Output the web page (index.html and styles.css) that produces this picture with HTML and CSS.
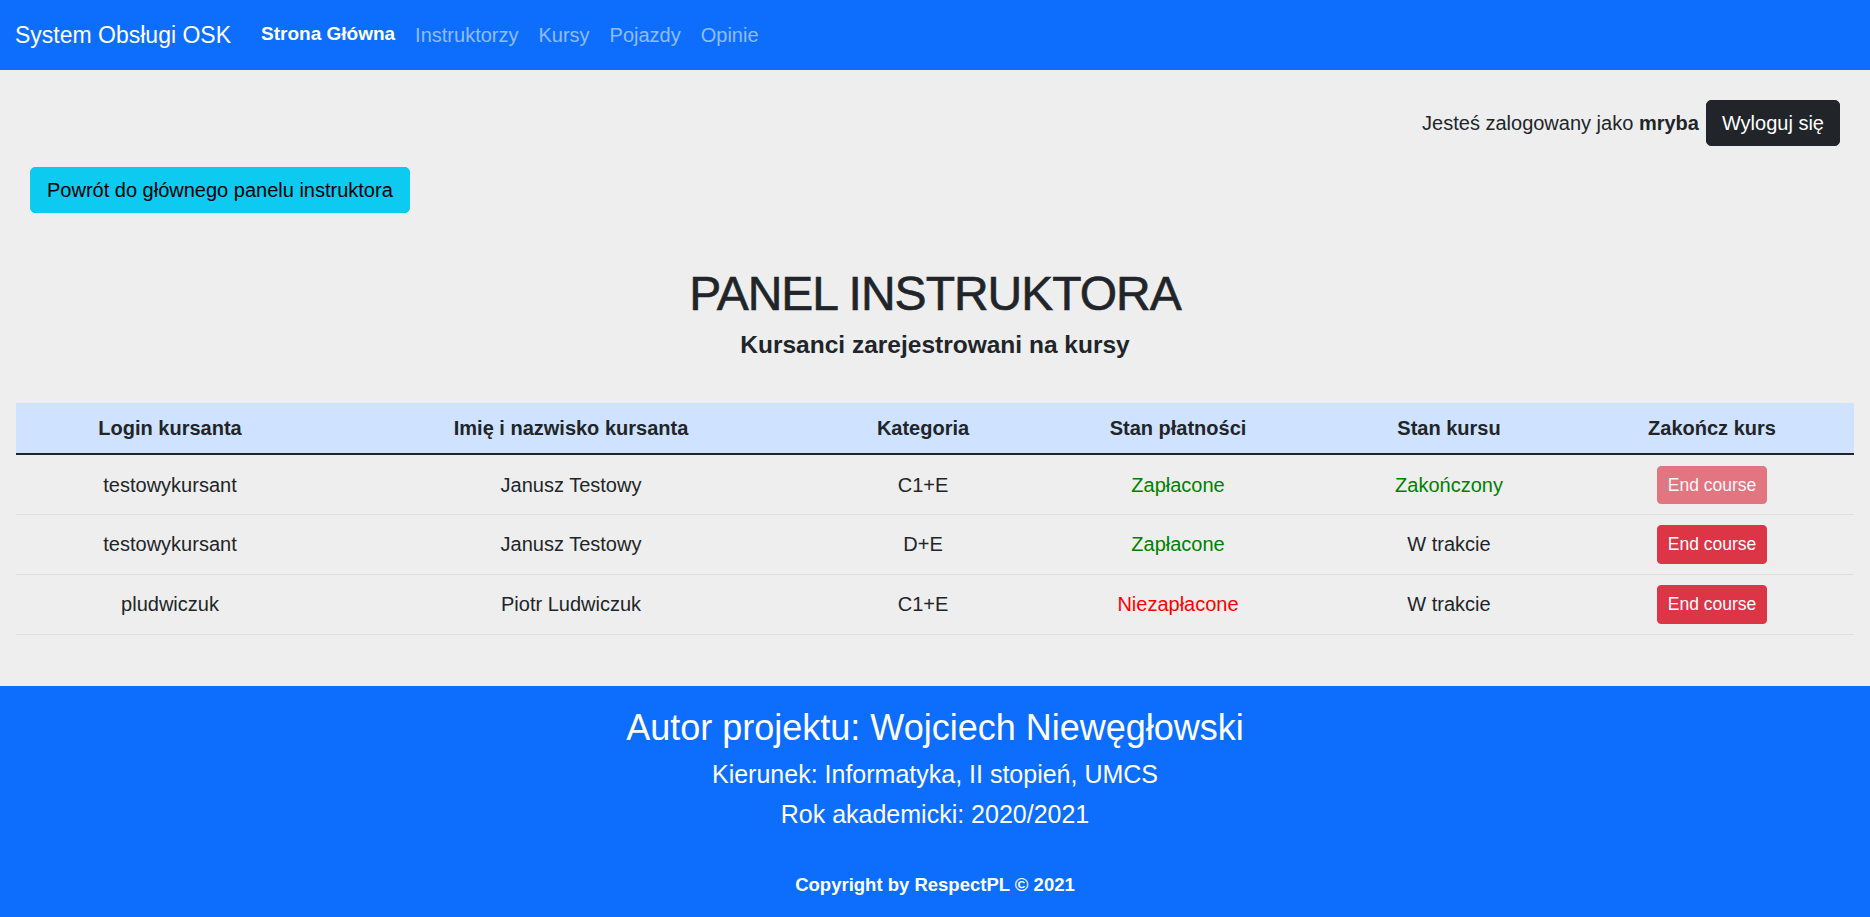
FILE: index.html
```html
<!DOCTYPE html>
<html lang="pl">
<head>
<meta charset="utf-8">
<title>Panel instruktora</title>
<link rel="stylesheet" href="styles.css">
</head>
<body>
<nav class="navbar">
  <a class="brand" href="#">System Obsługi OSK</a>
  <ul class="nav">
    <li><a class="nav-link active" href="#">Strona Główna</a></li>
    <li><a class="nav-link" href="#">Instruktorzy</a></li>
    <li><a class="nav-link" href="#">Kursy</a></li>
    <li><a class="nav-link" href="#">Pojazdy</a></li>
    <li><a class="nav-link" href="#">Opinie</a></li>
  </ul>
</nav>
<main class="main">
  <div class="login-row">
    <span class="login-text">Jesteś zalogowany jako <b>mryba</b></span>
    <button class="btn btn-dark">Wyloguj się</button>
  </div>
  <div class="back-row">
    <button class="btn btn-info">Powrót do głównego panelu instruktora</button>
  </div>
  <h1 class="title">PANEL INSTRUKTORA</h1>
  <h5 class="subtitle">Kursanci zarejestrowani na kursy</h5>
  <table class="table">
    <colgroup>
      <col class="c1"><col class="c2"><col class="c3"><col class="c4"><col class="c5"><col class="c6">
    </colgroup>
    <thead>
      <tr>
        <th>Login kursanta</th>
        <th>Imię i nazwisko kursanta</th>
        <th>Kategoria</th>
        <th>Stan płatności</th>
        <th>Stan kursu</th>
        <th>Zakończ kurs</th>
      </tr>
    </thead>
    <tbody>
      <tr>
        <td>testowykursant</td>
        <td>Janusz Testowy</td>
        <td>C1+E</td>
        <td class="ok">Zapłacone</td>
        <td class="ok">Zakończony</td>
        <td><button class="btn btn-danger btn-sm" disabled>End course</button></td>
      </tr>
      <tr>
        <td>testowykursant</td>
        <td>Janusz Testowy</td>
        <td>D+E</td>
        <td class="ok">Zapłacone</td>
        <td>W trakcie</td>
        <td><button class="btn btn-danger btn-sm">End course</button></td>
      </tr>
      <tr>
        <td>pludwiczuk</td>
        <td>Piotr Ludwiczuk</td>
        <td>C1+E</td>
        <td class="bad">Niezapłacone</td>
        <td>W trakcie</td>
        <td><button class="btn btn-danger btn-sm">End course</button></td>
      </tr>
    </tbody>
  </table>
</main>
<footer class="footer">
  <h3 class="f-author">Autor projektu: Wojciech Niewęgłowski</h3>
  <h5 class="f-line">Kierunek: Informatyka, II stopień, UMCS</h5>
  <h5 class="f-line">Rok akademicki: 2020/2021</h5>
  <p class="f-copy">Copyright by RespectPL © 2021</p>
</footer>
</body>
</html>
```
FILE: styles.css
```css
* { box-sizing: border-box; }
html, body { margin: 0; padding: 0; }
body {
  font-family: "Liberation Sans", Arial, sans-serif;
  font-size: 20px;
  line-height: 1.5;
  color: #212529;
  background: #eeeeee;
}
a { text-decoration: none; }

.navbar {
  display: flex;
  align-items: center;
  height: 70px;
  padding: 0 15px;
  background: #0d6efd;
}
.brand {
  font-size: 23px;
  color: #fff;
  margin-right: 20px;
  line-height: 1.5;
}
.nav {
  display: flex;
  list-style: none;
  margin: 0;
  padding: 0;
}
.nav-link {
  display: block;
  padding: 10px 10px;
  color: rgba(255,255,255,0.55);
  font-size: 20px;
}
.nav-link.active { color: #fff; font-weight: 700; font-size: 19px; }

.main {
  padding: 30px 16px 51px;
}
.login-row {
  display: flex;
  justify-content: flex-end;
  align-items: center;
  gap: 7px;
  padding-right: 14px;
}
.btn {
  font-family: inherit;
  font-size: 20px;
  line-height: 1.5;
  padding: 7px 15px;
  border: 1px solid transparent;
  border-radius: 5px;
  cursor: pointer;
}
.btn-dark { background: #212529; color: #fff; border-color: #212529; }
.btn-info { background: #0dcaf0; color: #000; border-color: #0dcaf0; padding: 7px 16px; }
.btn-danger { background: #dc3545; color: #fff; border-color: #dc3545; }
.btn-sm { font-size: 17.5px; padding: 5px 10px; border-radius: 4px; }
.btn:disabled { opacity: 0.65; cursor: default; }

.back-row {
  margin-top: 21px;
  padding-left: 14px;
}
.title {
  margin: 51px 0 0;
  text-align: center;
  font-size: 48px;
  letter-spacing: -1px;
  font-weight: 400;
  line-height: 1.25;
  -webkit-text-stroke: 0.6px #212529;
}
.subtitle {
  margin: 6px 0 0;
  text-align: center;
  font-size: 24.5px;
  font-weight: 700;
  line-height: 1.2;
}
.table {
  width: 100%;
  margin-top: 44px;
  border-collapse: collapse;
  table-layout: fixed;
}
.c1 { width: 308px; }
.c2 { width: 494px; }
.c3 { width: 210px; }
.c4 { width: 300px; }
.c5 { width: 242px; }
.c6 { width: auto; }
.table th, .table td {
  text-align: center;
  vertical-align: middle;
  padding: 10px 10px;
}
.table thead th {
  background: #cfe2ff;
  font-weight: 700;
  border-bottom: 2px solid #212529;
  height: 50px;
}
.table tbody td {
  border-bottom: 1px solid #dedede;
  height: 60px;
}
.ok { color: #008000; }
.bad { color: #ff0000; }

.footer {
  background: #0d6efd;
  color: #fff;
  text-align: center;
  padding: 20px 0 17px;
  height: 231px;
}
.f-author {
  margin: 0;
  font-size: 36px;
  font-weight: 400;
  line-height: 1.2;
}
.f-line {
  margin: 10px 0 0;
  font-size: 25px;
  font-weight: 400;
  line-height: 1.2;
}
.f-copy {
  margin: 42px 0 0;
  font-size: 18.5px;
  font-weight: 700;
  line-height: 1.5;
}
```
